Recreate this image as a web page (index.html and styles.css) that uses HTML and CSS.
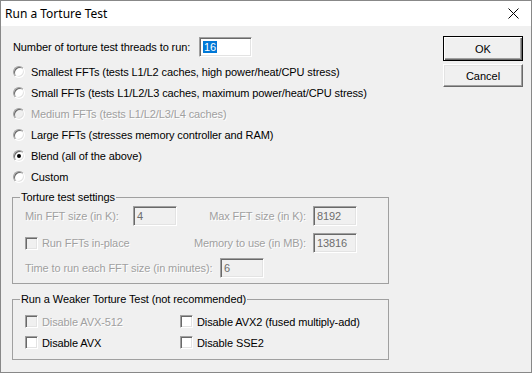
FILE: index.html
```html
<!DOCTYPE html>
<html lang="en">
<head>
    <meta charset="UTF-8">
    <meta name="viewport" content="width=device-width, initial-scale=1.0">
    <title>Run a Torture Test</title>
    <link rel="stylesheet" href="styles.css">
</head>
<body>
    <div class="window">
        <div class="titlebar">
            <span class="title">Run a Torture Test</span>
            <svg class="close" width="11" height="11" viewBox="0 0 11 11">
                <path d="M0.5 0.5L10.5 10.5M10.5 0.5L0.5 10.5" stroke="#000" stroke-width="1"/>
            </svg>
        </div>
        <div class="client">
            <div class="main">
                <div class="threads">
                    <label>Number of torture test threads to run:</label>
                    <div class="edit threads-edit"><span class="sel">16</span></div>
                </div>

                <ul class="radios">
                    <li><span class="radio"></span>Smallest FFTs (tests L1/L2 caches, high power/heat/CPU stress)</li>
                    <li><span class="radio"></span>Small FFTs (tests L1/L2/L3 caches, maximum power/heat/CPU stress)</li>
                    <li class="disabled"><span class="radio"></span>Medium FFTs (tests L1/L2/L3/L4 caches)</li>
                    <li><span class="radio"></span>Large FFTs (stresses memory controller and RAM)</li>
                    <li><span class="radio checked"></span>Blend (all of the above)</li>
                    <li><span class="radio"></span>Custom</li>
                </ul>

                <fieldset class="group settings">
                    <legend>Torture test settings</legend>
                    <div class="row row-fft">
                        <span class="dim min-label">Min FFT size (in K):</span>
                        <div class="edit off small-edit">4</div>
                        <span class="dim right-label">Max FFT size (in K):</span>
                        <div class="edit off small-edit">8192</div>
                    </div>
                    <div class="row row-mem">
                        <span class="check off"></span>
                        <span class="dim check-label">Run FFTs in-place</span>
                        <span class="dim right-label">Memory to use (in MB):</span>
                        <div class="edit off small-edit">13816</div>
                    </div>
                    <div class="row row-time">
                        <span class="dim time-label">Time to run each FFT size (in minutes):</span>
                        <div class="edit off small-edit">6</div>
                    </div>
                </fieldset>

                <fieldset class="group weaker">
                    <legend>Run a Weaker Torture Test (not recommended)</legend>
                    <div class="checks">
                        <div class="item"><span class="check off"></span><span class="dim">Disable AVX-512</span></div>
                        <div class="item"><span class="check"></span>Disable AVX2 (fused multiply-add)</div>
                        <div class="item"><span class="check"></span>Disable AVX</div>
                        <div class="item"><span class="check"></span>Disable SSE2</div>
                    </div>
                </fieldset>
            </div>

            <div class="buttons">
                <button class="btn default">OK</button>
                <button class="btn">Cancel</button>
            </div>
        </div>
    </div>
</body>
</html>
```

FILE: styles.css
```css
body {
    margin: 0;
    padding: 0;
    background: #fff;
}
.window {
    width: 532px;
    height: 373px;
    box-sizing: border-box;
    border: 1px solid #888;
    display: flex;
    flex-direction: column;
    font-family: "Liberation Sans", Arial, sans-serif;
    font-size: 11px;
    letter-spacing: -0.1px;
    color: #000;
}
.titlebar {
    height: 25px;
    flex: none;
    background: #fff;
    display: flex;
    align-items: center;
    justify-content: space-between;
    padding: 0 12px 0 4px;
    letter-spacing: 0;
}
.title {
    font-family: "Noto Sans", sans-serif;
    font-size: 12px;
}
.close {
    display: block;
}
.client {
    flex: 1;
    background: #f0f0f0;
    display: flex;
    padding: 11px 8px 0 11px;
}
.main {
    width: 377px;
}
.threads {
    height: 20px;
    display: flex;
    align-items: center;
    padding-left: 1px;
}
.threads label {
    width: 186px;
}
.threads-edit {
    width: 53px;
    background: #fff;
}
.sel {
    background: #0078d7;
    color: #fff;
    padding: 0 1px;
}
.edit {
    height: 20px;
    box-sizing: border-box;
    border: 1px solid;
    border-color: #a0a0a0 #fff #fff #a0a0a0;
    box-shadow: inset 1px 1px #696969, inset -1px -1px #e3e3e3;
    padding: 2px 3px 0 3px;
    line-height: 15px;
}
.edit.off {
    background: #f0f0f0;
    color: #6d6d6d;
}
.small-edit {
    width: 44px;
    flex: none;
}
.radios {
    list-style: none;
    margin: 4px 0 0 0;
    padding: 0 0 0 1px;
}
.radios li {
    height: 21px;
    display: flex;
    align-items: center;
}
.radio {
    width: 12px;
    height: 12px;
    box-sizing: border-box;
    border-radius: 50%;
    border: 1px solid;
    border-color: #a0a0a0 #fff #fff #a0a0a0;
    box-shadow: inset 1px 1px #696969, inset -1px -1px #e3e3e3;
    background: #fff;
    margin-right: 6px;
    position: relative;
}
.radio.checked::after {
    content: "";
    position: absolute;
    left: 3px;
    top: 3px;
    width: 4px;
    height: 4px;
    border-radius: 50%;
    background: #000;
}
.disabled {
    color: #a0a0a0;
    text-shadow: 1px 1px #fff;
}
.disabled .radio {
    background: #f0f0f0;
}
.dim {
    color: #a0a0a0;
    text-shadow: 1px 1px #fff;
}
.group {
    margin: 4px 0 0 0;
    padding: 2px 0 5px 7px;
    border: 1px solid #a0a0a0;
    min-width: 0;
}
.group legend {
    padding: 0 1px;
    line-height: 13px;
}
.settings {
    padding-right: 31px;
}
.row {
    height: 20px;
    display: flex;
    align-items: center;
    padding-left: 5px;
}
.row-mem {
    margin-top: 7px;
}
.row-time {
    margin-top: 5px;
}
.min-label {
    width: 108px;
}
.right-label {
    flex: 1;
    text-align: right;
    padding-right: 7px;
}
.time-label {
    width: 195px;
}
.check {
    width: 13px;
    height: 13px;
    box-sizing: border-box;
    border: 1px solid;
    border-color: #a0a0a0 #fff #fff #a0a0a0;
    box-shadow: inset 1px 1px #696969, inset -1px -1px #e3e3e3;
    background: #fff;
    margin-right: 4px;
    flex: none;
}
.check.off {
    background: #f0f0f0;
}
.weaker {
    margin-top: 9px;
    padding: 5px 0 6px 7px;
}
.checks {
    display: grid;
    grid-template-columns: 155px 1fr;
    padding-left: 5px;
}
.item {
    height: 21px;
    display: flex;
    align-items: center;
}
.buttons {
    margin-left: 54px;
    margin-top: -1px;
    display: flex;
    flex-direction: column;
    gap: 3px;
}
.btn {
    width: 80px;
    height: 23px;
    font-family: "Liberation Sans", Arial, sans-serif;
    font-size: 11px;
    color: #000;
    background: #f0f0f0;
    border: 1px solid;
    border-color: #fff #696969 #696969 #fff;
    box-shadow: inset -1px -1px #a0a0a0, inset 1px 1px #e3e3e3;
    padding: 0;
}
.btn.default {
    height: 25px;
    border: 1px solid #000;
    box-shadow: inset 1px 1px #fff, inset -1px -1px #696969, inset -2px -2px #a0a0a0;
}
```
